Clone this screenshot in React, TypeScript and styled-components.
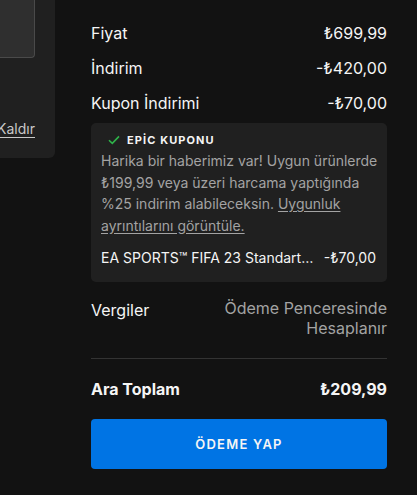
import styled, { createGlobalStyle } from "styled-components";

const GlobalStyle = createGlobalStyle`
  html, body {
    margin: 0;
    padding: 0;
    background: #121212;
  }
  body {
    font-family: Inter, "Noto Sans", "Liberation Sans", sans-serif;
    color: #f5f5f5;
    -webkit-font-smoothing: antialiased;
  }
`;

const Page = styled.div`
  display: flex;
  align-items: flex-start;
  gap: 36px;
  width: 417px;
  height: 495px;
  overflow: hidden;
`;

const LeftCol = styled.div`
  width: 55px;
  flex-shrink: 0;
  display: flex;
  justify-content: flex-end;
  overflow: hidden;
`;

const ItemCard = styled.div`
  width: 240px;
  flex-shrink: 0;
  background: #202020;
  border-radius: 0 0 6px 6px;
  padding: 0 20px 20px 0;
  box-sizing: border-box;
  display: flex;
  flex-direction: column;
  align-items: flex-end;
`;

const Thumb = styled.div`
  width: 100%;
  height: 58px;
  background: #2f2f2f;
  border: 1px solid #4a4a4a;
  border-top: none;
  border-radius: 0 0 4px 4px;
  box-sizing: border-box;
`;

const RemoveLink = styled.a`
  margin-top: 62px;
  font-size: 14px;
  line-height: 18px;
  color: #c8c8c8;
  text-decoration: underline;
  text-underline-offset: 3px;
`;

const Summary = styled.div`
  width: 296px;
  flex-shrink: 0;
  padding-top: 21px;
  display: flex;
  flex-direction: column;
`;

const Row = styled.div<{ $gap?: number }>`
  display: flex;
  justify-content: space-between;
  align-items: flex-start;
  font-size: 16px;
  line-height: 24px;
  margin-bottom: ${({ $gap }) => $gap ?? 11}px;
`;

const Label = styled.span<{ $bold?: boolean }>`
  font-weight: ${({ $bold }) => ($bold ? 700 : 400)};
  color: #f5f5f5;
`;

const Value = styled.span<{ $bold?: boolean; $muted?: boolean }>`
  font-weight: ${({ $bold }) => ($bold ? 700 : 400)};
  color: ${({ $muted }) => ($muted ? "#a3a3a3" : "#f5f5f5")};
  text-align: right;
  line-height: ${({ $muted }) => ($muted ? "20px" : "24px")};
  white-space: nowrap;
`;

const CouponBox = styled.div`
  background: #202020;
  border-radius: 5px;
  padding: 9px 6px 14px 10px;
  margin-bottom: 16px;
`;

const CouponHead = styled.div`
  display: flex;
  align-items: center;
  gap: 7px;
  padding-left: 7px;
  font-size: 11px;
  line-height: 16px;
  font-weight: 700;
  letter-spacing: 1.1px;
  color: #f5f5f5;
`;

const CouponText = styled.p`
  margin: 2px 0 0;
  font-size: 14px;
  line-height: 21.5px;
  color: #a3a3a3;

  a {
    color: #a3a3a3;
    text-decoration: underline;
    text-underline-offset: 2px;
  }
`;

const CouponItem = styled.div`
  display: flex;
  justify-content: space-between;
  gap: 9px;
  margin-top: 12px;
  padding-right: 5px;
  font-size: 14px;
  line-height: 20px;
  color: #f5f5f5;
`;

const ItemName = styled.span`
  flex: 1;
  min-width: 0;
  overflow: hidden;
  white-space: nowrap;
  text-overflow: ellipsis;
`;

const ItemPrice = styled.span`
  flex-shrink: 0;
  white-space: nowrap;
`;

const Divider = styled.hr`
  border: none;
  border-top: 1px solid #333;
  margin: 20px 0 18px;
`;

const PayButton = styled.button`
  margin-top: 18px;
  height: 50px;
  width: 100%;
  border: none;
  border-radius: 4px;
  background: #0074e4;
  color: #f5f5f5;
  font-family: inherit;
  font-size: 13px;
  font-weight: 600;
  letter-spacing: 1.2px;
`;

const Check = () => (
  <svg width="12" height="10" viewBox="0 0 12 10" fill="none">
    <path d="M1 5.2 L4.3 8.4 L11 1.4" stroke="#2fb34a" strokeWidth="1.6" />
  </svg>
);

export default function App() {
  return (
    <>
      <GlobalStyle />
      <Page>
        <LeftCol>
          <ItemCard>
            <Thumb />
            <RemoveLink>Kaldır</RemoveLink>
          </ItemCard>
        </LeftCol>
        <Summary>
          <Row>
            <Label>Fiyat</Label>
            <Value>₺699,99</Value>
          </Row>
          <Row>
            <Label>İndirim</Label>
            <Value>-₺420,00</Value>
          </Row>
          <Row $gap={8}>
            <Label>Kupon İndirimi</Label>
            <Value>-₺70,00</Value>
          </Row>
          <CouponBox>
            <CouponHead>
              <Check />
              EPİC KUPONU
            </CouponHead>
            <CouponText>
              Harika bir haberimiz var! Uygun ürünlerde ₺199,99 veya üzeri harcama yaptığında %25 indirim
              alabileceksin. <a>Uygunluk ayrıntılarını görüntüle.</a>
            </CouponText>
            <CouponItem>
              <ItemName>EA SPORTS™ FIFA 23 Standart Sürüm</ItemName>
              <ItemPrice>-₺70,00</ItemPrice>
            </CouponItem>
          </CouponBox>
          <Row $gap={0}>
            <Label>Vergiler</Label>
            <Value $muted>
              Ödeme Penceresinde
              <br />
              Hesaplanır
            </Value>
          </Row>
          <Divider />
          <Row $gap={0}>
            <Label $bold>Ara Toplam</Label>
            <Value $bold>₺209,99</Value>
          </Row>
          <PayButton>ÖDEME YAP</PayButton>
        </Summary>
      </Page>
    </>
  );
}
